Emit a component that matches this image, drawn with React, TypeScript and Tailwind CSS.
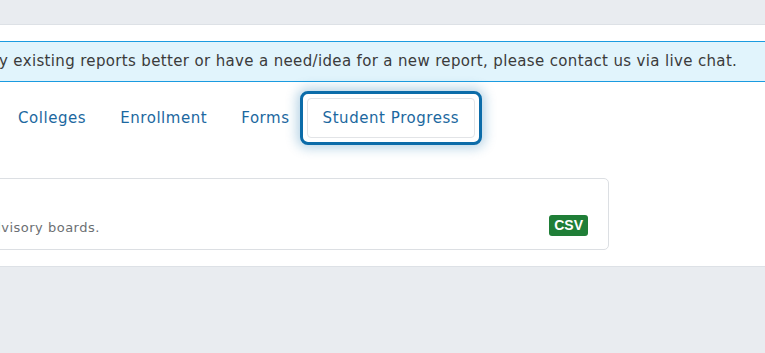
const tabs = ['Colleges', 'Enrollment', 'Forms'];

const App = () => {
  return (
    <div className="h-[353px] w-[765px] overflow-hidden bg-[#e9ecf0] font-['DejaVu_Sans',sans-serif]">
      <div className="h-[24px]" />
      <div className="h-[243px] border-y border-[#dde1e6] bg-white">
        {/* info banner */}
        <div className="mt-[16px] flex h-[41px] items-center border-y border-[#1b9be0] bg-[#e1f4fc] text-[15px] tracking-[0.35px] text-[#3b3b3b]">
          <span className="-ml-[1px] whitespace-nowrap">
            y existing reports better or have a need/idea for a new report, please contact us via live chat.
          </span>
        </div>

        {/* tabs */}
        <div className="mt-[16px] flex items-center gap-[2px] pl-[2px] tracking-[0.55px]">
          {tabs.map((t) => (
            <button
              key={t}
              className="flex h-[40px] items-center rounded-[4px] border border-transparent px-[15px] text-[15px] text-[#1c68a0]"
            >
              {t}
            </button>
          ))}
          <div className="-m-[8px] rounded-[8px] border-[3px] border-[#0c6ca9] bg-white p-[4px] shadow-[0_0_12px_3px_rgba(12,108,169,0.3)]">
            <button className="flex h-[40px] items-center rounded-[4px] border border-[#e2e4e7] bg-white px-[15px] text-[15px] text-[#1c68a0]">
              Student Progress
            </button>
          </div>
        </div>

        {/* report card */}
        <div className="mt-[40px] -ml-[20px] flex h-[72px] w-[629px] items-end justify-between rounded-[5px] border border-[#dcdfe3] bg-white pb-[13px] pr-[20px]">
          <p className="-mb-[1px] pl-[3px] text-[13px] tracking-[0.5px] text-[#6c6f73]">advisory boards.</p>
          <span className="rounded-[3px] bg-[#1f7e37] px-[5px] py-[2px] font-['Liberation_Sans',sans-serif] text-[14px] font-bold leading-[17px] text-white">
            CSV
          </span>
        </div>
      </div>
    </div>
  );
};

export default App;
